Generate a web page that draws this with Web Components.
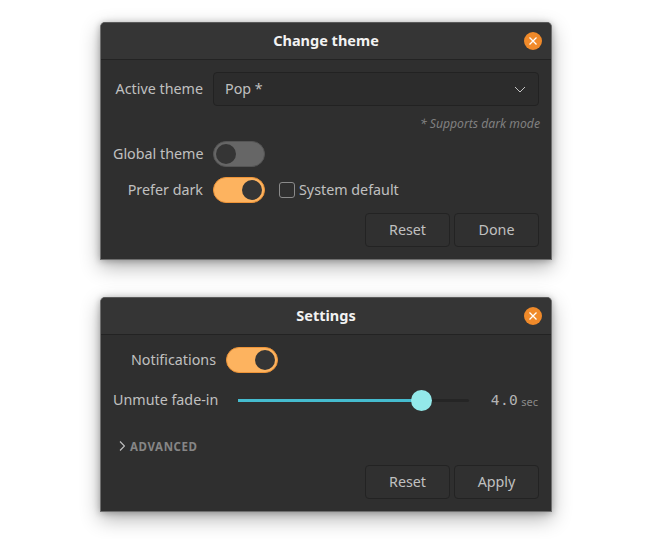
<!DOCTYPE html>
<html>
<head>
<meta charset="utf-8">
<style>
  html, body { margin: 0; background: #fff; }
  body {
    box-sizing: border-box;
    min-height: 100vh;
    display: flex;
    flex-direction: column;
    gap: 37px;
    padding: 22px 0 0 100px;
    font: 14.3px "Noto Sans", sans-serif;
    color: #c0c0c0;
  }
</style>
</head>
<body>
  <app-window title="Change theme" style="height:238px">
    <form-row label="Active theme" width="100" style="margin-top:12px">
      <app-combo value="Pop *"></app-combo>
    </form-row>
    <app-hint>* Supports dark mode</app-hint>
    <form-row label="Global theme" width="100" style="margin-top:10px"><app-switch></app-switch></form-row>
    <form-row label="Prefer dark" width="100" style="margin-top:10px">
      <app-switch on></app-switch>
      <app-check>System default</app-check>
    </form-row>
    <button-bar style="margin-top:10px">
      <app-button>Reset</app-button>
      <app-button>Done</app-button>
    </button-bar>
  </app-window>

  <app-window title="Settings" style="height:215px">
    <form-row label="Notifications" width="113" style="margin-top:12px"><app-switch on></app-switch></form-row>
    <form-row label="Unmute fade-in" width="113" style="margin-top:17px">
      <app-slider value="4.0" unit="sec" percent="79.4"></app-slider>
    </form-row>
    <app-expander>ADVANCED</app-expander>
    <button-bar style="margin-top:9px">
      <app-button>Reset</app-button>
      <app-button>Apply</app-button>
    </button-bar>
  </app-window>

<script>
class AppWindow extends HTMLElement {
  constructor () {
    super()
    this.shadow = this.attachShadow({ mode: 'open' })
  }

  connectedCallback () {
    this.shadow.innerHTML = /* html */`
      <style>
        :host {
          display: flex;
          flex-direction: column;
          box-sizing: border-box;
          width: 452px;
          background: #2f2f2f;
          border-radius: 5px 5px 0 0;
          border: 1px solid #6e6e6e;
          border-top-color: #5a5a5a;
          box-shadow: 0 7px 20px rgba(0, 0, 0, .3), 0 1px 7px rgba(0, 0, 0, .28);
        }
        header {
          flex: none;
          box-sizing: border-box;
          height: 37px;
          padding-bottom: 2px;
          display: flex;
          align-items: center;
          justify-content: center;
          background: #353535;
          border-bottom: 1px solid #232323;
          border-radius: 4px 4px 0 0;
          font-weight: 700;
          font-size: 14.5px;
          color: #f2f2f2;
          position: relative;
        }
        svg { position: absolute; right: 9px; top: 9px; }
        main { flex: 1; padding: 0 12px; }
      </style>
      <header>
        ${this.getAttribute('title')}
        <svg width="18" height="18" viewBox="0 0 18 18">
          <circle cx="9" cy="9" r="9" fill="#f08a2a"/>
          <path d="M5.5 5.500l7 7M12.500 5.500l-7 7" stroke="#fff" stroke-width="1.3" fill="none"/>
        </svg>
      </header>
      <main><slot></slot></main>
    `
  }
}

class FormRow extends HTMLElement {
  constructor () {
    super()
    this.shadow = this.attachShadow({ mode: 'open' })
  }

  connectedCallback () {
    this.shadow.innerHTML = /* html */`
      <style>
        :host { display: flex; align-items: center; }
        label { flex: none; box-sizing: border-box; text-align: right; padding: 0 10px 2px 0; white-space: nowrap; }
        div { flex: 1; display: flex; align-items: center; }
      </style>
      <label style="width:${this.getAttribute('width')}px">${this.getAttribute('label')}</label>
      <div><slot></slot></div>
    `
  }
}

class AppCombo extends HTMLElement {
  constructor () {
    super()
    this.shadow = this.attachShadow({ mode: 'open' })
  }

  connectedCallback () {
    this.shadow.innerHTML = /* html */`
      <style>
        :host {
          flex: 1;
          height: 34px;
          box-sizing: border-box;
          display: flex;
          align-items: center;
          justify-content: space-between;
          padding: 0 12px 0 11px;
          background: #2c2c2c;
          border: 1px solid #222;
          border-radius: 4px;
        }
        span { padding-bottom: 2px; }
      </style>
      <span>${this.getAttribute('value')}</span>
      <svg width="12" height="7" viewBox="0 0 12 7"><path d="M1 1l5 5 5-5" stroke="#c4c4c4" fill="none"/></svg>
    `
  }
}

class AppHint extends HTMLElement {
  constructor () {
    super()
    this.attachShadow({ mode: 'open' }).innerHTML = /* html */`
      <style>
        :host {
          display: block;
          margin-top: 10px;
          margin-right: -1px;
          height: 15px;
          line-height: 15px;
          text-align: right;
          font-size: 12.2px;
          font-style: italic;
          color: #808080;
        }
      </style>
      <slot></slot>
    `
  }
}

class AppSwitch extends HTMLElement {
  constructor () {
    super()
    this.attachShadow({ mode: 'open' }).innerHTML = /* html */`
      <style>
        :host {
          flex: none;
          display: flex;
          align-items: center;
          box-sizing: border-box;
          width: 52px;
          height: 26px;
          padding: 2px;
          border-radius: 13px;
          background: #666;
          border: 1px solid #555;
        }
        :host([on]) {
          background: #fdb35f;
          border-color: #ee9438;
          justify-content: flex-end;
        }
        i { width: 20px; height: 20px; border-radius: 50%; background: #353535; }
      </style>
      <i></i>
    `
  }
}

class AppCheck extends HTMLElement {
  constructor () {
    super()
    this.attachShadow({ mode: 'open' }).innerHTML = /* html */`
      <style>
        :host { display: flex; align-items: center; gap: 4px; margin-left: 14px; }
        i { width: 16px; height: 16px; box-sizing: border-box; border: 1px solid #8a8a8a; border-radius: 3px; }
        span { padding-bottom: 2px; }
      </style>
      <i></i><span><slot></slot></span>
    `
  }
}

class AppSlider extends HTMLElement {
  constructor () {
    super()
    this.shadow = this.attachShadow({ mode: 'open' })
  }

  connectedCallback () {
    const percent = this.getAttribute('percent')
    this.shadow.innerHTML = /* html */`
      <style>
        :host { flex: 1; display: flex; align-items: center; height: 20px; }
        .track { position: relative; width: 231px; height: 3px; margin-left: 12px; background: #252525; border-radius: 2px; }
        .fill { position: absolute; left: 0; top: 0; bottom: 0; width: ${percent}%; background: #45bccf; }
        .thumb { position: absolute; left: ${percent}%; top: -9px; margin-left: -10px; width: 21px; height: 21px; border-radius: 50%; background: #93e9ea; }
        .val { margin-left: auto; padding-bottom: 2px; font: 14.5px "DejaVu Sans Mono", monospace; letter-spacing: .4px; color: #b4b4b4; }
        .unit { margin-left: 3px; margin-right: 1px; font-size: 11px; color: #8a8a8a; padding-top: 1px; }
      </style>
      <div class="track"><div class="fill"></div><div class="thumb"></div></div>
      <span class="val">${this.getAttribute('value')}</span>
      <span class="unit">${this.getAttribute('unit')}</span>
    `
  }
}

class AppExpander extends HTMLElement {
  constructor () {
    super()
    this.attachShadow({ mode: 'open' }).innerHTML = /* html */`
      <style>
        :host {
          display: flex;
          align-items: center;
          gap: 5px;
          margin-top: 25px;
          padding-left: 6px;
          height: 20px;
          font-size: 11.5px;
          font-weight: 700;
          letter-spacing: .6px;
          color: #868686;
        }
      </style>
      <svg width="6" height="10" viewBox="0 0 6 10"><path d="M1 .5l4.500 4.500-4.500 4.500" stroke="#c0c0c0" stroke-width="1.2" fill="none"/></svg>
      <slot></slot>
    `
  }
}

class ButtonBar extends HTMLElement {
  constructor () {
    super()
    this.attachShadow({ mode: 'open' }).innerHTML = /* html */`
      <style>:host { display: flex; justify-content: flex-end; gap: 4px; }</style>
      <slot></slot>
    `
  }
}

class AppButton extends HTMLElement {
  constructor () {
    super()
    this.attachShadow({ mode: 'open' }).innerHTML = /* html */`
      <style>
        :host {
          box-sizing: border-box;
          width: 85px;
          height: 34px;
          padding-bottom: 1px;
          display: flex;
          align-items: center;
          justify-content: center;
          background: #303030;
          border: 1px solid #232323;
          border-radius: 4px;
        }
      </style>
      <slot></slot>
    `
  }
}

customElements.define('app-window', AppWindow)
customElements.define('form-row', FormRow)
customElements.define('app-combo', AppCombo)
customElements.define('app-hint', AppHint)
customElements.define('app-switch', AppSwitch)
customElements.define('app-check', AppCheck)
customElements.define('app-slider', AppSlider)
customElements.define('app-expander', AppExpander)
customElements.define('button-bar', ButtonBar)
customElements.define('app-button', AppButton)
</script>
</body>
</html>
